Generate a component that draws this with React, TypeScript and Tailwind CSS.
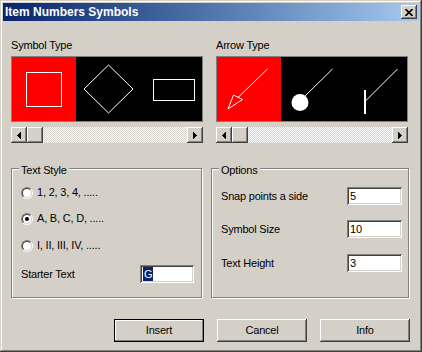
import React from "react";

const RAISED =
  "bg-[#d4d0c8] shadow-[inset_-1px_-1px_0_#404040,inset_1px_1px_0_#ffffff,inset_-2px_-2px_0_#808080]";
const SUNKEN =
  "bg-white shadow-[inset_1px_1px_0_#808080,inset_-1px_-1px_0_#ffffff,inset_2px_2px_0_#404040,inset_-2px_-2px_0_#d4d0c8]";
const GROUP =
  "relative border border-[#808080] shadow-[inset_1px_1px_0_#ffffff,1px_1px_0_#ffffff]";

function ArrowGlyph({ dir }: { dir: "left" | "right" }) {
  return (
    <svg width="4" height="7" viewBox="0 0 4 7" shapeRendering="crispEdges">
      {dir === "left" ? (
        <g fill="#000">
          <rect x="3" y="0" width="1" height="7" />
          <rect x="2" y="1" width="1" height="5" />
          <rect x="1" y="2" width="1" height="3" />
          <rect x="0" y="3" width="1" height="1" />
        </g>
      ) : (
        <g fill="#000">
          <rect x="0" y="0" width="1" height="7" />
          <rect x="1" y="1" width="1" height="5" />
          <rect x="2" y="2" width="1" height="3" />
          <rect x="3" y="3" width="1" height="1" />
        </g>
      )}
    </svg>
  );
}

function ScrollBar() {
  return (
    <div className="mt-[5px] flex h-[16px] w-[192px]">
      <div className={`${RAISED} flex w-[16px] items-center justify-center`}>
        <ArrowGlyph dir="left" />
      </div>
      <div className={`${RAISED} w-[16px]`} />
      <div className="flex-1 bg-[image:repeating-conic-gradient(#ffffff_0%_25%,#d4d0c8_0%_50%)] bg-[length:2px_2px]" />
      <div className={`${RAISED} flex w-[16px] items-center justify-center`}>
        <ArrowGlyph dir="right" />
      </div>
    </div>
  );
}

function SymbolStrip() {
  return (
    <svg width="190" height="64" viewBox="0 0 190 64">
      <rect x="0" y="0" width="64" height="64" fill="#ff0000" />
      <g fill="none" stroke="#fff" strokeWidth="1">
        <rect x="14.5" y="15.5" width="35" height="34" shapeRendering="crispEdges" />
        <path d="M72 32 L96.5 8 L121 32 L96.5 56 Z" />
        <rect x="141.5" y="22.5" width="41" height="21" shapeRendering="crispEdges" />
      </g>
    </svg>
  );
}

function ArrowStrip() {
  return (
    <svg width="190" height="64" viewBox="0 0 190 64">
      <rect x="0" y="0" width="64" height="64" fill="#ff0000" />
      <g fill="none" stroke="#fff" strokeWidth="1">
        <path d="M50.5 12 L21 40.5" />
        <path d="M11 52 L16.5 38 L25.5 42.5 Z" />
        <path d="M115.5 12 L88 39" />
        <path d="M180.5 12 L148 44.5" />
      </g>
      <circle cx="83" cy="45.5" r="8.5" fill="#fff" />
      <rect x="147" y="33" width="2" height="24" fill="#fff" />
    </svg>
  );
}

function Radio({ checked, label }: { checked?: boolean; label: string }) {
  return (
    <div className="flex h-[13px] items-center">
      <div className="h-[12px] w-[12px] rounded-full border border-t-[#808080] border-l-[#808080] border-b-white border-r-white">
        <div className="flex h-full w-full items-center justify-center rounded-full border border-t-[#404040] border-l-[#404040] border-b-[#d4d0c8] border-r-[#d4d0c8] bg-white">
          {checked && <div className="h-[4px] w-[4px] rounded-full bg-black" />}
        </div>
      </div>
      <span className="ml-[4px]">{label}</span>
    </div>
  );
}

function Field({ value, width }: { value: React.ReactNode; width: string }) {
  return (
    <div className={`${SUNKEN} ${width} flex h-[18px] items-center pl-[3px]`}>{value}</div>
  );
}

function Button({ label, isDefault }: { label: string; isDefault?: boolean }) {
  return (
    <div
      className={
        isDefault
          ? "flex h-[23px] w-[90px] items-center justify-center border border-black bg-[#d4d0c8] shadow-[inset_-1px_-1px_0_#808080,inset_1px_1px_0_#ffffff]"
          : `${RAISED} flex h-[23px] w-[90px] items-center justify-center`
      }
    >
      {label}
    </div>
  );
}

export default function App() {
  return (
    <div className="h-[352px] w-[422px] bg-[#d4d0c8] p-[3px] font-['Liberation_Sans',Arial,sans-serif] text-[11px] tracking-[-0.2px] text-black shadow-[inset_-1px_-1px_0_#404040,inset_1px_1px_0_#d4d0c8,inset_-2px_-2px_0_#808080,inset_2px_2px_0_#ffffff]">
      {/* Title bar */}
      <div className="flex h-[18px] items-center justify-between bg-linear-to-r from-[#0a246a] to-[#a6caf0]">
        <span className="pl-[2px] text-[12px] font-bold tracking-normal text-white">
          Item Numbers Symbols
        </span>
        <div className={`${RAISED} mr-[2px] flex h-[14px] w-[16px] items-center justify-center`}>
          <svg width="8" height="7" viewBox="0 0 8 7">
            <path d="M0.5 0 L7.5 7 M7.5 0 L0.5 7" stroke="#000" strokeWidth="1.6" />
          </svg>
        </div>
      </div>

      {/* Pickers */}
      <div className="flex gap-[13px] pl-[8px] pt-[18px]">
        <div className="flex flex-col">
          <div className="h-[13px] leading-[13px]">Symbol Type</div>
          <div className="mt-[4px] h-[66px] w-[192px] border border-[#808080] bg-black">
            <SymbolStrip />
          </div>
          <ScrollBar />
        </div>
        <div className="flex flex-col">
          <div className="h-[13px] leading-[13px]">Arrow Type</div>
          <div className="mt-[4px] h-[66px] w-[192px] border border-[#808080] bg-black">
            <ArrowStrip />
          </div>
          <ScrollBar />
        </div>
      </div>

      {/* Groups */}
      <div className="mt-[25px] flex gap-[9px] pl-[8px]">
        <div className={`${GROUP} h-[130px] w-[191px]`}>
          <span className="absolute -top-[5px] left-[7px] bg-[#d4d0c8] px-[2px] leading-[13px]">
            Text Style
          </span>
          <div className="flex flex-col pl-[9px] pr-[7px] pt-[17px]">
            <Radio label="1, 2, 3, 4, ....." />
            <div className="mt-[13px]">
              <Radio checked label="A, B, C, D, ....." />
            </div>
            <div className="mt-[14px]">
              <Radio label="I, II, III, IV, ....." />
            </div>
            <div className="mt-[13px] flex items-center justify-between">
              <span>Starter Text</span>
              <Field
                width="w-[54px]"
                value={<span className="bg-[#0a246a] px-[1px] leading-[14px] text-white">G</span>}
              />
            </div>
          </div>
        </div>

        <div className={`${GROUP} h-[130px] w-[198px]`}>
          <span className="absolute -top-[5px] left-[7px] bg-[#d4d0c8] px-[2px] leading-[13px]">
            Options
          </span>
          <div className="flex flex-col pl-[9px] pr-[6px] pt-[18px]">
            <div className="flex items-center justify-between">
              <span>Snap points a side</span>
              <Field width="w-[55px]" value="5" />
            </div>
            <div className="mt-[15px] flex items-center justify-between">
              <span>Symbol Size</span>
              <Field width="w-[55px]" value="10" />
            </div>
            <div className="mt-[16px] flex items-center justify-between">
              <span>Text Height</span>
              <Field width="w-[55px]" value="3" />
            </div>
          </div>
        </div>
      </div>

      {/* Buttons */}
      <div className="mt-[21px] flex gap-[13px] pl-[111px]">
        <Button label="Insert" isDefault />
        <Button label="Cancel" />
        <Button label="Info" />
      </div>
    </div>
  );
}
